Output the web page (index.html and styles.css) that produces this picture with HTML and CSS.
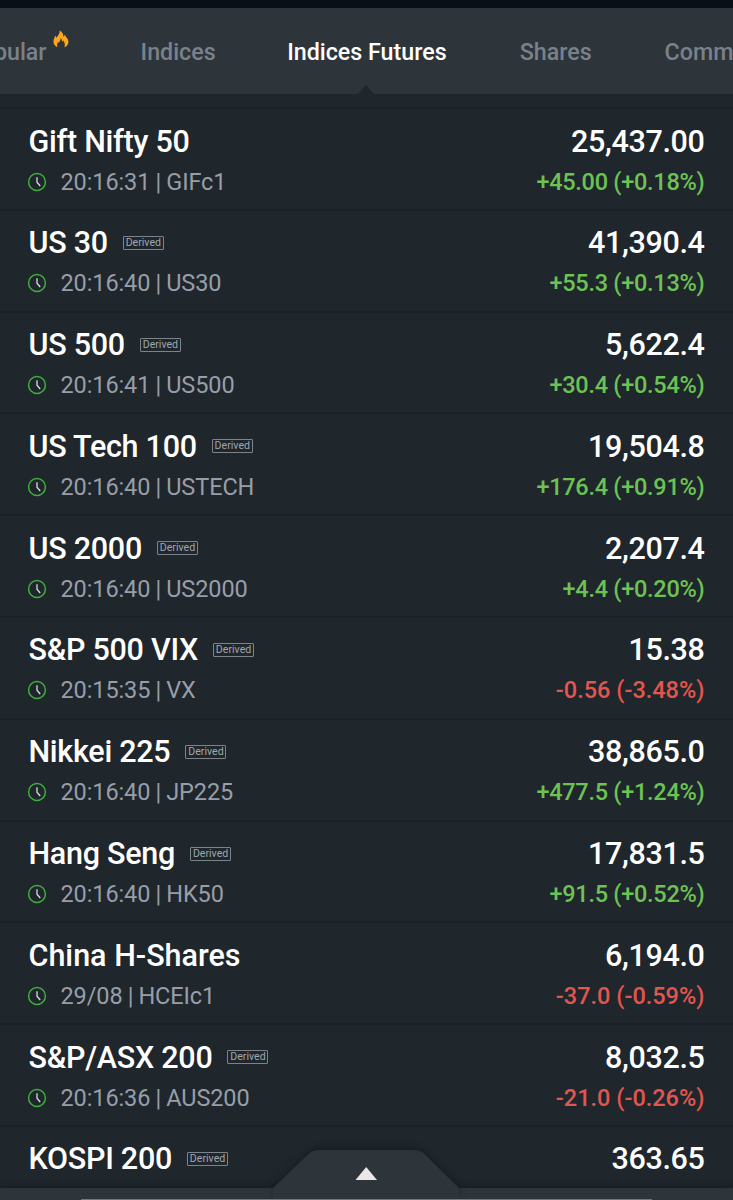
FILE: index.html
```
<!DOCTYPE html>
<html lang="en">
<head>
  <meta charset="UTF-8">
  <meta name="viewport" content="width=device-width, initial-scale=1.0">
  <title>Markets - Indices Futures</title>
  <link rel="stylesheet" href="styles.css">
</head>
<body>
  <svg class="sprite" width="0" height="0">
    <symbol id="clock" viewBox="0 0 20 20">
      <circle cx="10" cy="10" r="8.4" fill="none" stroke="#3fae3d" stroke-width="1.5"/>
      <path d="M10 5.2V10.2L13.2 14" fill="none" stroke="#d5dde0" stroke-width="1.3"/>
    </symbol>
  </svg>

  <div class="app">
    <nav class="tabs">
      <span class="tab popular">Popular
        <svg class="flame" width="16" height="18" viewBox="0 0 16 18"><path d="M4.5 17.3C1.8 16 .4 13.7.5 11.4.6 9 1.8 7.9 2.1 5.6L3.6 7.8C4.9 5.2 6.9 4.1 6.7.5 9.4 1.8 10.4 4.1 10.6 7L12 4.5C12.3 6.8 15.4 8.4 15.4 11.7 15.4 14.4 13.8 16.4 11.4 17.3 12.3 14.8 11.8 12.6 10.2 10.3L9.5 12.2C9 10.5 9 9.3 7.7 8 7.8 10.4 6.5 11.2 5.9 13L5.1 11.8C4.1 13.7 3.8 15.4 4.5 17.3Z" fill="#ffa51d"/></svg>
      </span>
      <span class="tab">Indices</span>
      <span class="tab active">Indices Futures</span>
      <span class="tab">Shares</span>
      <span class="tab">Commodities</span>
    </nav>

    <main class="quotes">
      <div class="row">
        <div class="line"><span class="name">Gift Nifty 50</span><span class="price">25,437.00</span></div>
        <div class="line sub"><svg class="clock"><use href="#clock"/></svg><span class="time">20:16:31 | GIFc1</span><span class="change up">+45.00 (+0.18%)</span></div>
      </div>
      <div class="row">
        <div class="line"><span class="name">US 30</span><span class="badge">Derived</span><span class="price">41,390.4</span></div>
        <div class="line sub"><svg class="clock"><use href="#clock"/></svg><span class="time">20:16:40 | US30</span><span class="change up">+55.3 (+0.13%)</span></div>
      </div>
      <div class="row">
        <div class="line"><span class="name">US 500</span><span class="badge">Derived</span><span class="price">5,622.4</span></div>
        <div class="line sub"><svg class="clock"><use href="#clock"/></svg><span class="time">20:16:41 | US500</span><span class="change up">+30.4 (+0.54%)</span></div>
      </div>
      <div class="row">
        <div class="line"><span class="name">US Tech 100</span><span class="badge">Derived</span><span class="price">19,504.8</span></div>
        <div class="line sub"><svg class="clock"><use href="#clock"/></svg><span class="time">20:16:40 | USTECH</span><span class="change up">+176.4 (+0.91%)</span></div>
      </div>
      <div class="row">
        <div class="line"><span class="name">US 2000</span><span class="badge">Derived</span><span class="price">2,207.4</span></div>
        <div class="line sub"><svg class="clock"><use href="#clock"/></svg><span class="time">20:16:40 | US2000</span><span class="change up">+4.4 (+0.20%)</span></div>
      </div>
      <div class="row">
        <div class="line"><span class="name">S&amp;P 500 VIX</span><span class="badge">Derived</span><span class="price">15.38</span></div>
        <div class="line sub"><svg class="clock"><use href="#clock"/></svg><span class="time">20:15:35 | VX</span><span class="change down">-0.56 (-3.48%)</span></div>
      </div>
      <div class="row">
        <div class="line"><span class="name">Nikkei 225</span><span class="badge">Derived</span><span class="price">38,865.0</span></div>
        <div class="line sub"><svg class="clock"><use href="#clock"/></svg><span class="time">20:16:40 | JP225</span><span class="change up">+477.5 (+1.24%)</span></div>
      </div>
      <div class="row">
        <div class="line"><span class="name">Hang Seng</span><span class="badge">Derived</span><span class="price">17,831.5</span></div>
        <div class="line sub"><svg class="clock"><use href="#clock"/></svg><span class="time">20:16:40 | HK50</span><span class="change up">+91.5 (+0.52%)</span></div>
      </div>
      <div class="row">
        <div class="line"><span class="name wide">China H-Shares</span><span class="price">6,194.0</span></div>
        <div class="line sub"><svg class="clock"><use href="#clock"/></svg><span class="time">29/08 | HCEIc1</span><span class="change down">-37.0 (-0.59%)</span></div>
      </div>
      <div class="row">
        <div class="line"><span class="name">S&amp;P/ASX 200</span><span class="badge">Derived</span><span class="price">8,032.5</span></div>
        <div class="line sub"><svg class="clock"><use href="#clock"/></svg><span class="time">20:16:36 | AUS200</span><span class="change down">-21.0 (-0.26%)</span></div>
      </div>
      <div class="row">
        <div class="line"><span class="name">KOSPI 200</span><span class="badge">Derived</span><span class="price">363.65</span></div>
      </div>
    </main>

    <!-- pull-up drawer handle -->
    <footer class="drawer">
      <svg class="handle" width="206" height="60" viewBox="0 0 206 60">
        <path class="handle-shape" d="M10 48L45 14.5Q49.500 10 56 10H151Q157.500 10 162 14.500L196 48V60H10Z"/>
        <path d="M92.500 40L103.200 27L114 40Z" fill="#e9e7e8"/>
      </svg>
      <div class="drawer-edge"></div>
    </footer>
  </div>
</body>
</html>
```
FILE: styles.css
```
body {
  margin: 0;
  background: #1f262c;
  font-family: Roboto, sans-serif;
  color: #fff;
}
.sprite {
  position: absolute;
}
.app {
  position: relative;
  box-sizing: border-box;
  width: 733px;
  height: 1200px;
  overflow: hidden;
  border-top: 8px solid #090e17;
}
.tabs {
  position: relative;
  display: flex;
  gap: 73px;
  height: 86px;
  box-sizing: border-box;
  padding-top: 29px;
  margin-left: -34px;
  background: #2d353b;
  font-size: 23.25px;
  font-weight: 500;
  line-height: 30px;
  color: #7a818a;
  white-space: nowrap;
}
.tabs::after {
  content: "";
  position: absolute;
  left: 392px;
  bottom: 0;
  border: 8px solid transparent;
  border-top: 0;
  border-bottom: 9px solid #1f262c;
}
.popular {
  display: flex;
  gap: 6px;
  margin-right: -1px;
}
.flame {
  margin-top: -7px;
}
.active {
  margin-left: -1.5px;
  color: #fff;
}
.quotes {
  margin-top: 13px;
  border-top: 2px solid #1b2127;
}
.row {
  box-sizing: border-box;
  height: 101.8px;
  padding: 13px 28.5px 0;
  border-bottom: 2px solid #1b2127;
}
.line {
  display: flex;
  align-items: center;
  height: 38px;
  font-size: 30.5px;
  font-weight: 500;
  white-space: nowrap;
}
.name {
  letter-spacing: -0.27px;
}
.wide {
  letter-spacing: 0;
}
.price {
  margin-left: auto;
  letter-spacing: -0.35px;
}
.badge {
  box-sizing: border-box;
  width: 41px;
  height: 14px;
  margin-left: 15px;
  border: 1px solid #7b838b;
  border-radius: 1px;
  font-size: 10.6px;
  font-weight: 400;
  line-height: 12px;
  text-align: center;
  color: #a0a7ae;
}
.sub {
  height: 43px;
  font-size: 23.5px;
}
.clock {
  width: 20px;
  height: 20px;
  margin-left: -1.5px;
}
.time {
  margin-left: 13.5px;
  font-weight: 400;
  letter-spacing: -0.1px;
  word-spacing: -0.6px;
  color: #989ea8;
}
.change {
  margin-left: auto;
}
.up {
  letter-spacing: -0.27px;
  color: #6cc253;
}
.down {
  color: #e2564f;
}
.drawer {
  position: absolute;
  left: 0;
  right: 0;
  bottom: 0;
  height: 12px;
  background: #2d353b;
  box-shadow: 0 -2px 6px rgba(15, 20, 26, 0.5);
}
.handle {
  position: absolute;
  left: 263px;
  bottom: 0;
}
.handle-shape {
  fill: #2d353b;
  filter: drop-shadow(0 -2px 3px rgba(15, 20, 26, 0.5));
}
.drawer-edge {
  position: absolute;
  left: 81px;
  right: 81px;
  bottom: 0;
  height: 1px;
  background: #77767d;
}
```
